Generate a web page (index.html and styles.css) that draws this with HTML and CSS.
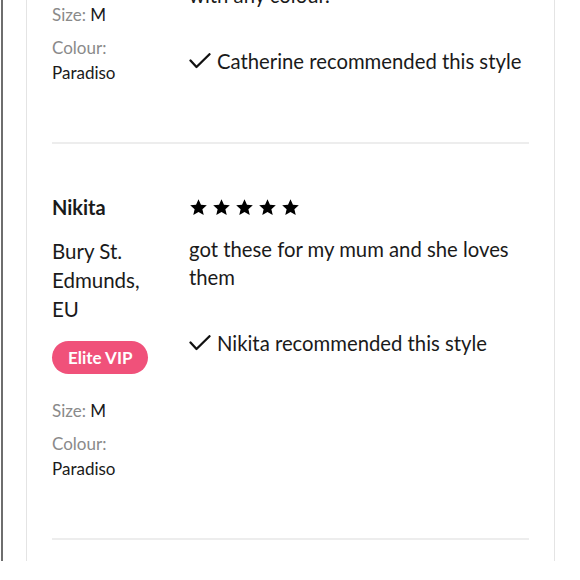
FILE: index.html
```html
<!DOCTYPE html>
<html lang="en">
<head>
<meta charset="utf-8">
<title>Reviews</title>
<link rel="stylesheet" href="styles.css">
</head>
<body>
<div class="page">
  <div class="card">
    <div class="review review-cut">
      <div class="left">
        <div class="meta meta-cut">
          <div class="meta-row"><span class="label">Size:</span> <span class="value">M</span></div>
          <div class="meta-row"><span class="label">Colour:</span><br><span class="value">Paradiso</span></div>
        </div>
      </div>
      <div class="right">
        <p class="text">with any colour.</p>
        <div class="recommend">
          <svg class="check" viewBox="0 0 22 16" width="22" height="16"><path d="M1.5 7.5 L7.5 14 L20.5 1.2" fill="none" stroke="#111" stroke-width="2.3" stroke-linecap="round" stroke-linejoin="round"/></svg>
          <span>Catherine recommended this style</span>
        </div>
      </div>
    </div>
    <hr class="divider">
    <div class="review">
      <div class="left">
        <div class="name">Nikita</div>
        <div class="location">Bury St. Edmunds, EU</div>
        <span class="badge">Elite VIP</span>
        <div class="meta">
          <div class="meta-row"><span class="label">Size:</span> <span class="value">M</span></div>
          <div class="meta-row"><span class="label">Colour:</span><br><span class="value">Paradiso</span></div>
        </div>
      </div>
      <div class="right">
        <div class="stars">
          <svg viewBox="0 0 24 24" width="19" height="19"><path d="M12 1.5l3.1 6.9 7.4.7-5.6 5 1.7 7.4L12 17.6l-6.6 3.9 1.7-7.4-5.6-5 7.4-.7z" fill="#000"/></svg>
          <svg viewBox="0 0 24 24" width="19" height="19"><path d="M12 1.5l3.1 6.9 7.4.7-5.6 5 1.7 7.4L12 17.6l-6.6 3.9 1.7-7.4-5.6-5 7.4-.7z" fill="#000"/></svg>
          <svg viewBox="0 0 24 24" width="19" height="19"><path d="M12 1.5l3.1 6.9 7.4.7-5.6 5 1.7 7.4L12 17.6l-6.6 3.9 1.7-7.4-5.6-5 7.4-.7z" fill="#000"/></svg>
          <svg viewBox="0 0 24 24" width="19" height="19"><path d="M12 1.5l3.1 6.9 7.4.7-5.6 5 1.7 7.4L12 17.6l-6.6 3.9 1.7-7.4-5.6-5 7.4-.7z" fill="#000"/></svg>
          <svg viewBox="0 0 24 24" width="19" height="19"><path d="M12 1.5l3.1 6.9 7.4.7-5.6 5 1.7 7.4L12 17.6l-6.6 3.9 1.7-7.4-5.6-5 7.4-.7z" fill="#000"/></svg>
        </div>
        <p class="text">got these for my mum and she loves them</p>
        <div class="recommend">
          <svg class="check" viewBox="0 0 22 16" width="22" height="16"><path d="M1.5 7.5 L7.5 14 L20.5 1.2" fill="none" stroke="#111" stroke-width="2.3" stroke-linecap="round" stroke-linejoin="round"/></svg>
          <span>Nikita recommended this style</span>
        </div>
      </div>
    </div>
    <hr class="divider">
  </div>
</div>
</body>
</html>
```
FILE: styles.css
```css
html, body {
  margin: 0;
  padding: 0;
  background: #fff;
}
body {
  font-family: Lato, "Open Sans", "Liberation Sans", sans-serif;
  color: #1a1a1a;
  overflow: hidden;
}
.page {
  margin-left: 1px;
  border-left: 2px solid #6e6e6e;
  padding-left: 23px;
  height: 580px;
  box-sizing: border-box;
}
.card {
  width: 529px;
  box-sizing: border-box;
  border-left: 1px solid #e4e4e4;
  border-right: 1px solid #e4e4e4;
  padding: 0 25px;
  height: 580px;
}
.review {
  display: grid;
  grid-template-columns: 115px 1fr;
  column-gap: 22px;
  padding: 49px 0 57px;
  align-items: start;
}
.review-cut {
  padding-top: 0;
  margin-top: -19px;
}
.left, .right {
  display: flex;
  flex-direction: column;
  align-items: flex-start;
}
.name {
  font-size: 20px;
  font-weight: 700;
  line-height: 28px;
}
.location {
  margin-top: 16px;
  font-size: 20.5px;
  line-height: 29px;
}
.badge {
  margin-top: 17px;
  background: #f0517a;
  color: #fff;
  font-weight: 700;
  font-size: 17px;
  line-height: 33px;
  height: 33px;
  padding: 0 16px;
  border-radius: 17px;
}
.meta {
  margin-top: 24px;
  display: flex;
  flex-direction: column;
  gap: 8px;
  font-size: 17px;
  line-height: 25px;
}
.meta-cut {
  margin-top: 21px;
}
.label {
  color: #8a8a8a;
}
.value {
  color: #1a1a1a;
}
.stars {
  display: flex;
  gap: 4px;
  height: 28px;
  align-items: center;
}
.stars svg {
  display: block;
}
.text {
  margin: 14px 0 0;
  font-size: 20.3px;
  line-height: 28px;
}
.review-cut .text {
  margin-top: 0;
}
.recommend {
  margin-top: 38px;
  display: flex;
  align-items: center;
  gap: 6px;
  font-size: 20.3px;
  line-height: 28px;
}
.check {
  display: block;
}
.divider {
  margin: 0;
  border: 0;
  height: 2px;
  background: #ededed;
}
```
